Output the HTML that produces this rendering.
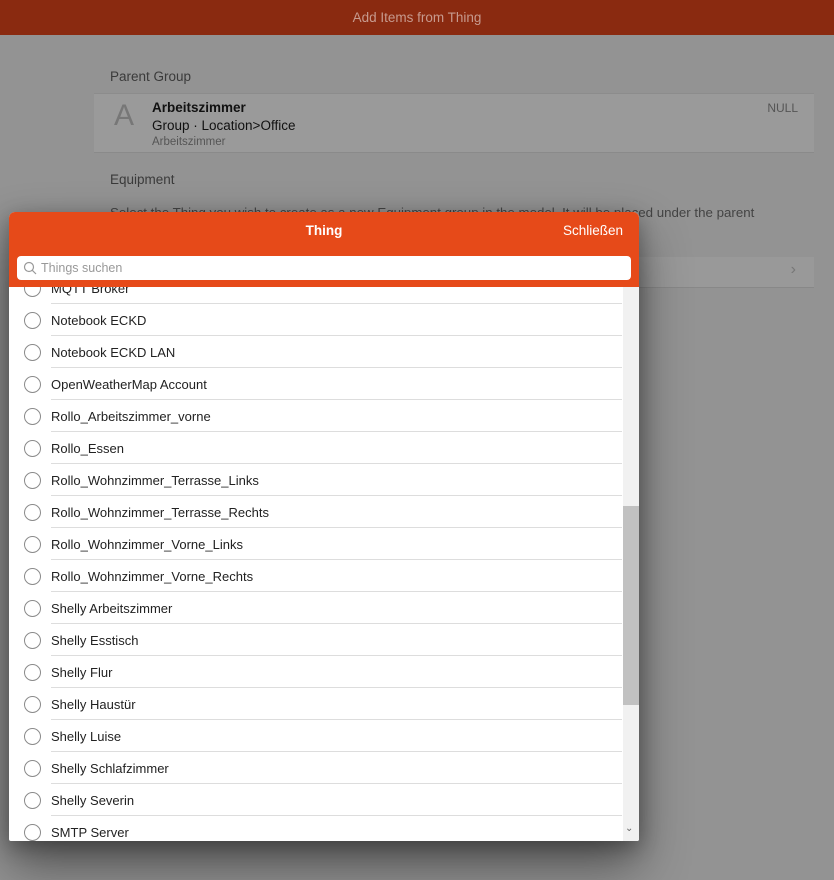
<!DOCTYPE html>
<html><head><meta charset="utf-8"><style>
*{box-sizing:border-box;margin:0;padding:0}
body{width:834px;height:880px;overflow:hidden;background:#939393;font-family:"Liberation Sans",sans-serif;position:relative}
.top{position:absolute;left:0;top:0;width:834px;height:35px;background:#8a2a10;color:#c79a8e;font-size:13.5px;text-align:center;line-height:35px}
.lbl{position:absolute;left:110px;font-size:13.5px;color:#3a3a3a}
.card{position:absolute;left:94px;top:93px;width:720px;height:60px;background:#9a9a9a;border-top:1px solid #8c8c8c;border-bottom:1px solid #8a8a8a}
.desc{position:absolute;left:110px;top:202px;font-size:13.3px;color:#444;line-height:21px;width:675px}
.row2{position:absolute;left:94px;top:257px;width:720px;height:31px;background:#999;border-bottom:1px solid #888}
.modal{position:absolute;left:9px;top:212px;width:630px;height:629px;background:#fff;border-radius:6px 6px 2px 2px;overflow:hidden;box-shadow:0 25px 50px rgba(0,0,0,.45),0 5px 20px rgba(0,0,0,.3)}
.mh{position:absolute;left:0;top:0;width:630px;height:75px;background:#e64a19;color:#fff;z-index:2}
.mh .t{position:absolute;left:0;width:630px;top:11px;text-align:center;font-size:13.5px;font-weight:bold}
.mh .c{position:absolute;right:16px;top:11px;font-size:13.5px}
.srch{position:absolute;left:8px;top:44px;width:614px;height:24px;background:#fff;border-radius:4px;color:#999;font-size:12.5px;line-height:24px;padding-left:24px}
.list{position:absolute;left:0;top:75px;width:614px;height:554px;overflow:hidden}
.item{position:absolute;left:0;width:614px;height:32px}
.item .r{position:absolute;left:15px;top:8px;width:17px;height:17px;border:1px solid #8a8a8a;border-radius:50%}
.item .n{position:absolute;left:42px;top:9px;font-size:13px;color:#222}
.item .s{position:absolute;left:42px;right:1px;bottom:0;height:1px;background:#ddd}
.sb{position:absolute;left:614px;top:75px;width:16px;height:554px;background:#f1f1f1}
.th{position:absolute;left:614px;top:294px;width:16px;height:199px;background:#c1c1c1}
</style></head><body>
<div class="top">Add Items from Thing</div>
<div class="lbl" style="top:69px">Parent Group</div>
<div class="card">
<div style="position:absolute;left:20px;top:5px;font-size:30px;color:#777">A</div>
<div style="position:absolute;left:58px;top:6px;font-size:13.5px;font-weight:bold;color:#111">Arbeitszimmer</div>
<div style="position:absolute;left:58px;top:24px;font-size:13.5px;color:#111">Group · Location&gt;Office</div>
<div style="position:absolute;left:58px;top:42px;font-size:11.5px;color:#555">Arbeitszimmer</div>
<div style="position:absolute;right:16px;top:7px;font-size:12px;color:#555">NULL</div>
</div>
<div class="lbl" style="top:172px">Equipment</div>
<div class="desc">Select the Thing you wish to create as a new Equipment group in the model. It will be placed under the parent group above. You can also change the semantic class.</div>
<div class="row2"><div style="position:absolute;right:18px;top:4px;color:#777;font-size:16px">›</div></div>
<div class="modal">
<div class="mh"><div class="t">Thing</div><div class="c">Schließen</div>
<div class="srch"><svg style="position:absolute;left:6px;top:5px" width="14" height="14" viewBox="0 0 14 14"><circle cx="6" cy="6" r="4.5" fill="none" stroke="#999" stroke-width="1.2"/><path d="M9.3 9.3L13 13" stroke="#999" stroke-width="1.2"/></svg>Things suchen</div></div>
<div class="list">
<div class="item" style="top:-15px"><div class="r"></div><div class="n">MQTT Broker</div><div class="s"></div></div>
<div class="item" style="top:17px"><div class="r"></div><div class="n">Notebook ECKD</div><div class="s"></div></div>
<div class="item" style="top:49px"><div class="r"></div><div class="n">Notebook ECKD LAN</div><div class="s"></div></div>
<div class="item" style="top:81px"><div class="r"></div><div class="n">OpenWeatherMap Account</div><div class="s"></div></div>
<div class="item" style="top:113px"><div class="r"></div><div class="n">Rollo_Arbeitszimmer_vorne</div><div class="s"></div></div>
<div class="item" style="top:145px"><div class="r"></div><div class="n">Rollo_Essen</div><div class="s"></div></div>
<div class="item" style="top:177px"><div class="r"></div><div class="n">Rollo_Wohnzimmer_Terrasse_Links</div><div class="s"></div></div>
<div class="item" style="top:209px"><div class="r"></div><div class="n">Rollo_Wohnzimmer_Terrasse_Rechts</div><div class="s"></div></div>
<div class="item" style="top:241px"><div class="r"></div><div class="n">Rollo_Wohnzimmer_Vorne_Links</div><div class="s"></div></div>
<div class="item" style="top:273px"><div class="r"></div><div class="n">Rollo_Wohnzimmer_Vorne_Rechts</div><div class="s"></div></div>
<div class="item" style="top:305px"><div class="r"></div><div class="n">Shelly Arbeitszimmer</div><div class="s"></div></div>
<div class="item" style="top:337px"><div class="r"></div><div class="n">Shelly Esstisch</div><div class="s"></div></div>
<div class="item" style="top:369px"><div class="r"></div><div class="n">Shelly Flur</div><div class="s"></div></div>
<div class="item" style="top:401px"><div class="r"></div><div class="n">Shelly Haustür</div><div class="s"></div></div>
<div class="item" style="top:433px"><div class="r"></div><div class="n">Shelly Luise</div><div class="s"></div></div>
<div class="item" style="top:465px"><div class="r"></div><div class="n">Shelly Schlafzimmer</div><div class="s"></div></div>
<div class="item" style="top:497px"><div class="r"></div><div class="n">Shelly Severin</div><div class="s"></div></div>
<div class="item" style="top:529px"><div class="r"></div><div class="n">SMTP Server</div><div class="s"></div></div>
</div>
<div class="sb"></div><div class="th"></div>
<div style="position:absolute;left:616px;top:611px;font-size:10px;color:#666">⌄</div>
</div>
</body></html>
